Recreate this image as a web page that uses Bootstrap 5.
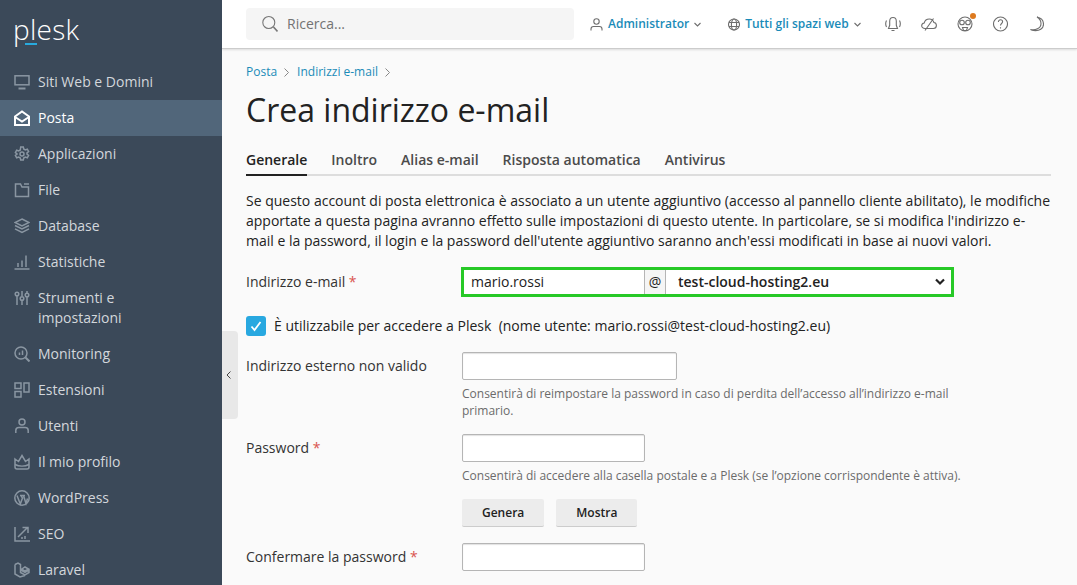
<!DOCTYPE html>
<html lang="it">
<head>
  <meta charset="UTF-8">
  <meta name="viewport" content="width=device-width, initial-scale=1.0">
  <title>Crea indirizzo e-mail</title>
  <link rel="stylesheet" href="https://cdn.jsdelivr.net/npm/bootstrap@5.3.0/dist/css/bootstrap.min.css">
  <style>
    html, body { height: 100%; overflow: hidden; }
    body { font-family: "Open Sans", sans-serif; font-size: 14px; line-height: 20px; color: #222; background: #fafafa; }
    .shell { height: 585px; }
    .side { width: 222px; flex: none; background: #3b4959; }
    .brand { height: 64px; padding: 11px 0 0 13px; }
    .brand-word { font-weight: 300; font-size: 28px; line-height: 36px; color: #fff; letter-spacing: .3px; position: relative; display: inline-block; }
    .brand-word::after { content: ""; position: absolute; left: 12px; top: 32px; width: 12px; height: 2px; background: #28aade; }
    .side-item { display: flex; gap: 8px; padding: 8px 14px; color: #d3d7dc; text-decoration: none; font-weight: 500; }
    .side-item.active { background: #51667a; color: #fff; }
    .side-item svg { flex: none; width: 16px; height: 16px; margin-top: 2px; fill: none; stroke: #8a96a2; stroke-width: 1.5; }
    .side-item.active svg { stroke: #fff; stroke-width: 2; }
    .handle { position: absolute; left: 222px; top: 331px; width: 16px; height: 88px; background: #e8e8e8; border-radius: 0 4px 4px 0; }
    .handle svg { position: absolute; left: 2px; top: 39px; }
    .top-bar { height: 49px; background: #fff; border-bottom: 1px solid #ccc; box-shadow: 0 1px 2px rgba(0,0,0,.12); padding: 8px 0 0 24px; }
    .find { width: 328px; height: 32px; background: #f5f5f5; border-radius: 4px; padding: 0 16px; color: #737373; gap: 9px; }
    .top-group { height: 32px; gap: 5px; }
    .top-user { margin-left: 16px; }
    .top-space { margin-left: 27px; }
    .top-tools { height: 32px; margin-left: 24px; gap: 20px; }
    .top-link { color: #1a8bb8; font-size: 12px; font-weight: 600; text-decoration: none; }
    .top-icon { fill: none; stroke: #6e6e6e; stroke-width: 1.1; }
    .moon-icon { margin-left: 2px; }
    .dot { position: absolute; right: -3px; top: -3px; width: 6px; height: 6px; border-radius: 50%; background: #dd7a1f; }
    .page-body { padding: 14px 26px 0 24px; }
    .crumbs { font-size: 12px; line-height: 18px; margin-bottom: 9px; }
    .crumbs a { color: #1a8bb8; text-decoration: none; }
    .crumbs svg { margin: 0 8px 0 7px; fill: none; stroke: #888; }
    .page-title { font-size: 32px; line-height: 40px; font-weight: 400; margin: 0 0 20px; color: #222; }
    .tab-row { gap: 24px; margin-bottom: 15px; border-bottom: 2px solid #ddd; }
    .tab-row .nav-item { margin-bottom: -2px; }
    .tab-row .nav-link { padding: 0 0 4px; color: #4b4b4b; font-weight: 600; font-size: 14px; line-height: 20px; border-bottom: 2px solid transparent; }
    .tab-row .nav-link.active { color: #222; border-bottom-color: #222; }
    .intro { margin: 0 0 16px; }
    .lbl { width: 216px; flex: none; padding-top: 4px; color: #333; }
    .lbl-mail { padding-top: 5px; }
    .req { color: #d9534f; }
    .mail-row { margin-bottom: 19px; }
    .mail-box { width: 493px; height: 30px; margin-left: -1px; border: 3px solid #27c927; background: #fff; }
    .mail-name { width: 181px; padding: 0 7px; line-height: 24px; border-right: 1px solid #b5b5b5; }
    .mail-at { width: 21px; text-align: center; line-height: 24px; border-right: 1px solid #b5b5b5; background: #f5f5f5; }
    .mail-dom { flex: 1; padding: 0 30px 0 12px; height: 24px; line-height: 24px; font-size: 14px; font-weight: 600; border: 0; border-radius: 0; color: #222;
      background-image: url("data:image/svg+xml,%3csvg xmlns='http://www.w3.org/2000/svg' viewBox='0 0 10 8'%3e%3cpath fill='none' stroke='%23222' stroke-width='2.2' d='M1 1.500 5 5.500 9 1.500'/%3e%3c/svg%3e");
      background-position: right 6px center; background-size: 10px 8px; }
    .check-row { margin-bottom: 16px; }
    .tick { width: 20px; height: 20px; border-radius: 3px; background: #28a8e0; }
    .plain-input { height: 28px; padding: 2px 6px; font-size: 14px; border: 1px solid #b5b5b5; border-radius: 2px; box-shadow: inset 0 1px 1px rgba(0,0,0,.12); }
    .w-wide { width: 215px; }
    .w-mid { width: 183px; }
    .hint { font-size: 12px; line-height: 17px; color: #6b6b6b; margin-top: 5px; width: 500px; }
    .field-row { margin-bottom: 15px; }
    .btn-row { gap: 12px; margin: 15px 0 16px; }
    .grey-btn { height: 28px; padding: 0 20px; font-size: 12px; font-weight: 600; line-height: 28px; background: #ececec; border: 0; border-bottom: 1px solid #ccc; border-radius: 2px; color: #222; }
  </style>
</head>
<body>
  <div class="shell d-flex position-relative">
    <!-- sidebar -->
    <aside class="side">
      <div class="brand"><span class="brand-word">plesk</span></div>
      <a class="side-item" href="#"><svg viewBox="0 0 16 16"><rect x="1" y="1.800" width="14" height="9"/><path d="M4.500 14.500h7" stroke-width="2"/></svg>Siti Web e Domini</a>
      <a class="side-item active" href="#"><svg viewBox="0 0 16 16"><path d="M1 6.500 8 1.500l7 5V15H1z"/><path d="M1 7l7 4.500L15 7"/></svg>Posta</a>
      <a class="side-item" href="#"><svg viewBox="0 0 16 16"><path d="M6.700 1h2.600l.4 2 1.600.9 2-.7 1.300 2.300-1.600 1.300v1.400l1.600 1.300-1.300 2.300-2-.7-1.600.9-.4 2H6.700l-.4-2-1.600-.9-2 .7-1.300-2.300 1.600-1.300V7.800L1.400 6.500l1.300-2.300 2 .7 1.600-.9z"/><circle cx="8" cy="8" r="2"/></svg>Applicazioni</a>
      <a class="side-item" href="#"><svg viewBox="0 0 16 16"><path d="M1.500 2h5l1.500 3h6.500v9.500h-13zM10 2h5"/></svg>File</a>
      <a class="side-item" href="#"><svg viewBox="0 0 16 16"><path d="M8 1l7 3.500-7 3.500-7-3.500zM1 7.500l7 3.500 7-3.500M1 10.800l7 3.700 7-3.700"/></svg>Database</a>
      <a class="side-item" href="#"><svg viewBox="0 0 16 16"><path d="M.5 15h15M4 13V9M8 13V6.500M12 13V1.500"/></svg>Statistiche</a>
      <a class="side-item" href="#"><svg viewBox="0 0 16 16"><path d="M3 6V15M8 1v5M8 10.500V15M13 1v2M13 7V15"/><circle cx="3" cy="4" r="1.800"/><circle cx="8" cy="8.500" r="1.800"/><circle cx="13" cy="5" r="1.800"/></svg>Strumenti e<br>impostazioni</a>
      <a class="side-item" href="#"><svg viewBox="0 0 16 16"><circle cx="7" cy="7" r="6"/><path d="M11.500 11.500 15.500 15.500" stroke-width="2"/><path d="M5.500 9V6.500M8.500 9V4.500"/></svg>Monitoring</a>
      <a class="side-item" href="#"><svg viewBox="0 0 16 16"><rect x="1" y="1" width="6" height="5.500"/><rect x="1" y="9.500" width="6" height="5.500"/><rect x="10" y="1" width="5" height="9"/></svg>Estensioni</a>
      <a class="side-item" href="#"><svg viewBox="0 0 16 16"><circle cx="8" cy="4" r="3"/><path d="M1.800 15v-2.500c0-1.800 1.500-3 3-3h6.400c1.500 0 3 1.200 3 3V15"/></svg>Utenti</a>
      <a class="side-item" href="#"><svg viewBox="0 0 16 16"><path d="M1 5l3.500 2.500L8 1.500l3.500 6L15 5v8c0 1-1 2-2 2H3c-1 0-2-1-2-2z"/><path d="M1 10.500c4 2 10 2 14 0"/></svg>Il mio profilo</a>
      <a class="side-item" href="#"><svg viewBox="0 0 16 16"><circle cx="8" cy="8" r="7.200"/><path d="M3 5.500l3.300 8.500L8.500 8 7 5.500M6 5.500h5M9.500 5.500l2.500 8 1.500-5"/></svg>WordPress</a>
      <a class="side-item" href="#"><svg viewBox="0 0 16 16"><path d="M1 1v14h15M4 11l9-9M8.500 1.500h5.500v5.500M8 13v-2M11 13v-3"/></svg>SEO</a>
      <a class="side-item" href="#"><svg viewBox="0 0 16 16"><path d="M1 2.500l3-1.500 2.500 1.500v8l4.500 2.500 4-2.500V8l-4 2.300L7 8M1 2.500V12l5 3 5-1.500M11 5l3.500 2L11 9l-3-2z"/></svg>Laravel</a>
    </aside>
    <div class="handle"><svg width="10" height="10" viewBox="0 0 10 10" fill="none" stroke="#444" stroke-width="1"><path d="M6.500 1.500 3 5l3.500 3.500"/></svg></div>

    <div class="flex-grow-1 overflow-hidden">
      <!-- top bar -->
      <header class="top-bar d-flex">
        <div class="find d-flex align-items-center">
          <svg width="16" height="18" viewBox="0 0 16 18" fill="none" stroke="#777" stroke-width="1.100"><circle cx="6.800" cy="7.500" r="6"/><path d="M11.500 12l4 4.500" stroke-width="1.600"/></svg>
          <span>Ricerca...</span>
        </div>
        <div class="top-group top-user d-flex align-items-center">
          <svg class="top-icon" width="13" height="13" viewBox="0 0 13 13"><circle cx="6.500" cy="3.500" r="2.700"/><path d="M1 12.500V11c0-1.500 1-2.500 2.500-2.500h6C11 8.500 12 9.500 12 11v1.500"/></svg>
          <a class="top-link" href="#">Administrator</a>
          <svg class="top-icon" width="7" height="5" viewBox="0 0 7 5"><path d="M.5 1 3.500 4l3-3"/></svg>
        </div>
        <div class="top-group top-space d-flex align-items-center">
          <svg class="top-icon" width="12" height="13" viewBox="0 0 12 13"><circle cx="6" cy="6.500" r="5.500"/><ellipse cx="6" cy="6.500" rx="2.600" ry="5.500"/><path d="M1 4.500h10M1 8.500h10"/></svg>
          <a class="top-link" href="#">Tutti gli spazi web</a>
          <svg class="top-icon" width="7" height="5" viewBox="0 0 7 5"><path d="M.5 1 3.500 4l3-3"/></svg>
        </div>
        <div class="top-tools d-flex align-items-center">
          <svg class="top-icon" width="16" height="16" viewBox="0 0 16 16"><path d="M8 1.500c-2 0-3.300 1.500-3.300 3.800v4L3.500 12.500h9L11.300 9.300v-4C11.300 3 10 1.500 8 1.500zM6.500 14.500h3M1.500 4.500c-1 2-1 4.500 0 6.500M14.500 4.500c1 2 1 4.500 0 6.500"/></svg>
          <svg class="top-icon" width="16" height="16" viewBox="0 0 16 16"><path d="M4 12.500C2 12.500.7 11 .7 9.800c0-1.500 1-2.600 2.500-2.800C3.800 4.500 6 3 8.300 3c2.400 0 4 1.500 4.600 3.500 1.500.2 2.500 1.500 2.500 3 0 1.700-1.300 3-3 3zM4 14.500 12.500 2.500"/></svg>
          <span class="position-relative d-inline-flex"><svg class="top-icon" width="16" height="16" viewBox="0 0 16 16"><circle cx="8" cy="8" r="7"/><circle cx="5" cy="6.500" r="2.300"/><circle cx="11" cy="6.500" r="2.300"/><path d="M5.500 11.500h5l-1 3h-3z"/></svg><span class="dot"></span></span>
          <svg class="top-icon" width="15" height="16" viewBox="0 0 15 16"><circle cx="7.500" cy="8" r="7"/><path d="M5.400 6c0-1.300 1-2.200 2.100-2.200s2.100.9 2.100 2c0 1.700-2.100 1.700-2.100 3.700M7.500 11.200v1.300"/></svg>
          <svg class="top-icon moon-icon" width="14" height="16" viewBox="0 0 14 16"><path d="M7 1c4 .8 6.500 3.500 6.500 7.300 0 4.200-4 7-10 6.200-1-.1-2-.5-3-1 4.500 1 10.500-.7 10.500-6C11 5 9.500 2.500 7 1z"/></svg>
        </div>
      </header>

      <!-- page -->
      <main class="page-body">
        <div class="crumbs d-flex align-items-center"><a href="#">Posta</a><svg width="5" height="9" viewBox="0 0 5 9"><path d="M.5.5l4 4-4 4"/></svg><a href="#">Indirizzi e-mail</a><svg width="5" height="9" viewBox="0 0 5 9"><path d="M.5.5l4 4-4 4"/></svg></div>
        <h1 class="page-title">Crea indirizzo e-mail</h1>
        <ul class="nav tab-row">
          <li class="nav-item"><a class="nav-link active" href="#">Generale</a></li>
          <li class="nav-item"><a class="nav-link" href="#">Inoltro</a></li>
          <li class="nav-item"><a class="nav-link" href="#">Alias e-mail</a></li>
          <li class="nav-item"><a class="nav-link" href="#">Risposta automatica</a></li>
          <li class="nav-item"><a class="nav-link" href="#">Antivirus</a></li>
        </ul>
        <p class="intro">Se questo account di posta elettronica è associato a un utente aggiuntivo (accesso al pannello cliente abilitato), le modifiche apportate a questa pagina avranno effetto sulle impostazioni di questo utente. In particolare, se si modifica l'indirizzo e-mail e la password, il login e la password dell'utente aggiuntivo saranno anch'essi modificati in base ai nuovi valori.</p>

        <div class="d-flex mail-row">
          <div class="lbl lbl-mail">Indirizzo e-mail <span class="req">*</span></div>
          <div class="mail-box d-flex">
            <div class="mail-name">mario.rossi</div>
            <div class="mail-at">@</div>
            <select class="form-select mail-dom"><option>test-cloud-hosting2.eu</option></select>
          </div>
        </div>

        <div class="d-flex align-items-center gap-2 check-row">
          <span class="tick d-inline-flex align-items-center justify-content-center"><svg width="14" height="14" viewBox="0 0 14 14" fill="none" stroke="#fff" stroke-width="1.800"><path d="M2.500 7.500 5.500 11 11.500 3"/></svg></span>
          <span>È utilizzabile per accedere a Plesk &nbsp;(nome utente: mario.rossi@test-cloud-hosting2.eu)</span>
        </div>

        <div class="d-flex field-row">
          <div class="lbl">Indirizzo esterno non valido</div>
          <div>
            <input class="plain-input w-wide d-block" type="text">
            <div class="hint">Consentirà di reimpostare la password in caso di perdita dell’accesso all’indirizzo e-mail primario.</div>
          </div>
        </div>

        <div class="d-flex">
          <div class="lbl">Password <span class="req">*</span></div>
          <div>
            <input class="plain-input w-mid d-block" type="password">
            <div class="hint text-nowrap">Consentirà di accedere alla casella postale e a Plesk (se l’opzione corrispondente è attiva).</div>
            <div class="d-flex btn-row">
              <button class="btn grey-btn" type="button">Genera</button>
              <button class="btn grey-btn" type="button">Mostra</button>
            </div>
          </div>
        </div>

        <div class="d-flex">
          <div class="lbl">Confermare la password <span class="req">*</span></div>
          <input class="plain-input w-mid" type="password">
        </div>
      </main>
    </div>
  </div>
  <script src="https://cdn.jsdelivr.net/npm/bootstrap@5.3.0/dist/js/bootstrap.bundle.min.js"></script>
</body>
</html>
